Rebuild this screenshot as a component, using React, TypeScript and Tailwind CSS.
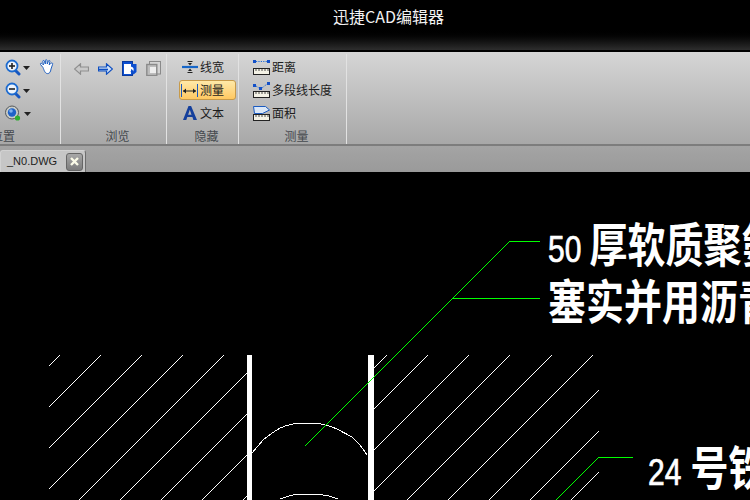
import React from "react";

const cjk = "font-['Microsoft_YaHei','Noto_Sans_CJK_SC',sans-serif]";

const hatchLines = [
  // left block
  [49, 366, 60, 355], [49, 407, 101, 355], [49, 448, 142, 355], [49, 489, 183, 355],
  [79, 500, 224, 355], [120, 500, 247, 373], [161, 500, 247, 414], [202, 500, 247, 455], [243, 500, 247, 496],
  // right block
  [374, 368, 387, 355], [374, 409, 428, 355], [374, 450, 469, 355], [374, 491, 510, 355],
  [407, 500, 552, 355], [448, 500, 593, 355], [489, 500, 599, 390], [530, 500, 599, 431], [571, 500, 599, 472],
];

const Caret = () => (
  <svg width="7" height="4" viewBox="0 0 7 4"><path d="M0 0h7L3.5 4z" fill="#222" /></svg>
);

const Zoom = ({ plus }: { plus?: boolean }) => (
  <svg width="16" height="17" viewBox="0 0 16 17">
    <path d="M10 11l4 4" stroke="#1657c0" strokeWidth="3" strokeLinecap="round" />
    <circle cx="7" cy="7" r="5.5" fill="#eef4fb" stroke="#1c6bd0" strokeWidth="1.8" />
    <path d="M4 7h6" stroke="#222" strokeWidth="1.6" />
    {plus && <path d="M7 4v6" stroke="#222" strokeWidth="1.6" />}
  </svg>
);

const Globe = () => (
  <svg width="17" height="17" viewBox="0 0 17 17">
    <ellipse cx="7" cy="7.5" rx="6.5" ry="6.5" fill="#c9cdc8" stroke="#55585a" strokeWidth="1" />
    <circle cx="7" cy="7.5" r="4.2" fill="#1f62c8" />
    <circle cx="6" cy="6" r="1.8" fill="#7fb0ec" />
    <circle cx="12.5" cy="13" r="2.6" fill="#2fae2f" />
  </svg>
);

const Hand = () => (
  <svg width="16" height="16" viewBox="0 0 16 16">
    <path
      d="M4 8.5L1.5 5.5C1 4.5 2 3.8 3 4.5L4.5 6 3.8 2.5C3.7 1.3 5 1.1 5.4 2.2L6.3 5 6.4 1.5C6.5.4 7.9.4 8 1.5L8.3 5 9.4 2C9.8 1 11 1.3 10.9 2.4L10.2 6 12 4.2C13 3.5 14 4.2 13.6 5.3L12 10C11.6 13 10.5 14.6 8.5 14.6 6 14.6 5 11 4 8.5z"
      fill="#fff"
      stroke="#1f5fc0"
      strokeWidth="1"
    />
  </svg>
);

const Arrow = ({ left, muted }: { left?: boolean; muted?: boolean }) => (
  <svg width="15" height="12" viewBox="0 0 15 12" className={left ? "-scale-x-100" : ""}>
    <path
      d="M0.5 4h8V0.8L14.5 6l-6 5.2V8h-8z"
      fill={muted ? "#c9c9c9" : "#cfe0f7"}
      stroke={muted ? "#8f8f8f" : "#0f4fc0"}
      strokeWidth="1.2"
    />
    {!muted && <path d="M1 6.5h9" stroke="#0f4fc0" strokeWidth="1.6" />}
  </svg>
);

const DocBlue = () => (
  <svg width="15" height="15" viewBox="0 0 15 15">
    <rect x="0.5" y="0.5" width="10" height="14" fill="#0d4fd0" stroke="#0a3a9e" />
    <rect x="2" y="3" width="7" height="10" fill="#fff" />
    <path d="M9 7.5V3H14.5V11L11.5 13.5 8 10.5H10.5V7.5z" fill="#0d4fd0" />
    <path d="M5 7L8 4.2V5.8C11 5.6 12.5 7.4 11.2 10.4 10.8 8.4 9.6 8 8 8.2V9.8z" fill="#fff" />
  </svg>
);

const DocGray = () => (
  <svg width="15" height="15" viewBox="0 0 15 15">
    <rect x="3.5" y="0.5" width="11" height="12.5" fill="#d4d4d4" stroke="#8a8a8a" />
    <rect x="0.8" y="3.5" width="10" height="11" fill="#bdbdbd" stroke="#8a8a8a" strokeWidth="1.4" />
    <rect x="4" y="6" width="6" height="6" fill="#eee" />
  </svg>
);

const LineWidth = () => (
  <svg width="16" height="12" viewBox="0 0 16 12">
    <path d="M0 6h16" stroke="#1766c8" strokeWidth="2.2" />
    <path d="M5.5 .5h5M5.5 11.5h5" stroke="#222" strokeWidth="1" />
    <path d="M6 2h4L8 4.5zM6 10h4L8 7.5z" fill="#222" />
  </svg>
);

const Measure = () => (
  <svg width="17" height="13" viewBox="0 0 17 13">
    <path d="M.5 0v13M16.5 0v13" stroke="#1b5bc0" strokeWidth="1" />
    <path d="M2 7h13" stroke="#222" strokeWidth="1" />
    <path d="M5 4.5L2 7l3 2.5zM12 4.5L15 7l-3 2.5z" fill="#222" />
  </svg>
);

const TextA = () => (
  <svg width="14" height="14" viewBox="0 0 14 14">
    <path d="M0 14L5.5 0h2.6L14 14h-3.6l-1-3H4.3l-1 3zM5.1 8.7h3.4L6.8 3.8z" fill="#143f9c" />
  </svg>
);

const Ruler = ({ y = 9 }: { y?: number }) => (
  <g>
    <rect x="0.5" y={y + 0.5} width="16" height="6" fill="#f4f2e6" stroke="#222" />
    <path d={`M3 ${y + 1}v2M6 ${y + 1}v2M9 ${y + 1}v2M12 ${y + 1}v2M15 ${y + 1}v2`} stroke="#222" strokeWidth="0.8" />
  </g>
);

const Dist = () => (
  <svg width="17" height="16" viewBox="0 0 17 16">
    <rect x="0" y="1" width="3" height="3" fill="#1350c8" />
    <rect x="14" y="1" width="3" height="3" fill="#1350c8" />
    <path d="M3 2.5h11" stroke="#1f6cd8" strokeDasharray="1.2 1.2" />
    <Ruler />
  </svg>
);

const Poly = () => (
  <svg width="17" height="16" viewBox="0 0 17 16">
    <rect x="0" y="2" width="3" height="3" fill="#1350c8" />
    <rect x="6" y="5" width="3" height="3" fill="#1350c8" />
    <rect x="14" y="0" width="3" height="3" fill="#1350c8" />
    <path d="M3 4l3 2M9 6l5-4" stroke="#1f6cd8" strokeDasharray="1 1" />
    <Ruler />
  </svg>
);

const Area = () => (
  <svg width="17" height="16" viewBox="0 0 17 16">
    <path d="M.5 1.5h12l4 3.5-7 3.5h-8z" fill="#dbe8f8" stroke="#1b5bc0" />
    <Ruler />
  </svg>
);

const ToolRow = ({ icon, label, active }: { icon: React.ReactNode; label: string; active?: boolean }) => (
  <div
    className={`flex items-center h-[20px] gap-[2px] rounded-[3px] text-[12px] leading-none text-[#1c1c1c] ${cjk} ${
      active ? "border border-[#c79a4a] bg-gradient-to-b from-[#ffe9a8] to-[#ffc860] pl-[1px] w-[57px]" : "pl-[2px]"
    }`}
  >
    <span className="flex justify-center w-[17px]">{icon}</span>
    <span>{label}</span>
  </div>
);

const Group = ({ width, label, children, clip }: { width: string; label: string; children: React.ReactNode; clip?: boolean }) => (
  <div className={`flex flex-col h-full border-r border-r-[#e2e2e2] overflow-hidden ${width}`}>
    <div className="flex-1 min-h-0">{children}</div>
    <div
      className={`h-[17px] text-[12px] leading-[17px] text-[#45494e] ${cjk} ${clip ? "ml-[-9px]" : "text-center pl-[8px]"}`}
    >
      {label}
    </div>
  </div>
);

export default function App() {
  return (
    <div className="relative w-[750px] h-[500px] overflow-hidden bg-black">
      <header className="h-[50px] pt-[5px] pl-[333px] bg-gradient-to-b from-[#000] from-[55%] to-[#2e2e2e]">
        <span className={`block text-[16px] leading-[22px] text-[#f2f2f2] ${cjk}`}>迅捷CAD编辑器</span>
      </header>
      <div className="h-[2px] bg-black" />

      <div className="flex h-[92px] pt-[2px] bg-gradient-to-b from-[#d6d6d6] to-[#a8a8a8]">
        <Group width="w-[61px]" label="位置" clip>
          <div className="grid grid-cols-[34px_20px] pt-[5px] pl-[5px]">
            <div className="flex flex-col gap-[6px]">
              <div className="flex items-center gap-[2px] h-[17px]"><Zoom plus /><Caret /></div>
              <div className="flex items-center gap-[2px] h-[17px]"><Zoom /><Caret /></div>
              <div className="flex items-center gap-[2px] h-[17px]"><Globe /><Caret /></div>
            </div>
            <div><Hand /></div>
          </div>
        </Group>
        <Group width="w-[106px]" label="浏览">
          <div className="flex items-center pl-[13px] pt-[7px] gap-[9px]">
            <Arrow left muted />
            <Arrow />
            <DocBlue />
            <DocGray />
          </div>
        </Group>
        <Group width="w-[72px]" label="隐藏">
          <div className="flex flex-col pt-[3px] pl-[12px] gap-[3px]">
            <ToolRow icon={<LineWidth />} label="线宽" />
            <ToolRow icon={<Measure />} label="测量" active />
            <ToolRow icon={<TextA />} label="文本" />
          </div>
        </Group>
        <Group width="w-[108px]" label="测量">
          <div className="flex flex-col pt-[3px] pl-[12px] gap-[3px]">
            <ToolRow icon={<Dist />} label="距离" />
            <ToolRow icon={<Poly />} label="多段线长度" />
            <ToolRow icon={<Area />} label="面积" />
          </div>
        </Group>
        <div className="flex-1" />
      </div>

      <div className="flex items-end h-[28px] border-t-2 border-t-[#7d7d7d] bg-gradient-to-b from-[#a4a4a4] to-[#9a9a9a]">
        <div className="flex items-center h-[22px] w-[86px] pl-[6px] gap-[9px] rounded-t-[3px] border border-b-0 border-[#d2d2d2] border-r-[#6d6d6d] bg-[#c6c6c6]">
          <span className="font-['Liberation_Sans',sans-serif] text-[11px] text-[#222]">_N0.DWG</span>
          <span className="flex items-center justify-center w-[17px] h-[18px] rounded-[3px] border border-[#666] bg-gradient-to-b from-[#a8a8a8] to-[#7d7d7d]">
            <svg width="9" height="9" viewBox="0 0 9 9">
              <path d="M1 1l7 7M8 1L1 8" stroke="#fbfbe8" strokeWidth="2.4" />
            </svg>
          </span>
        </div>
      </div>

      {/* drawing canvas, everything below sits on free coordinates */}
      <svg className="absolute left-0 top-0" width="750" height="500" viewBox="0 0 750 500" shapeRendering="crispEdges">
        {hatchLines.map(([x1, y1, x2, y2], i) => (
          <line key={i} x1={x1} y1={y1} x2={x2} y2={y2} stroke="#fff" strokeWidth="1" />
        ))}
        <rect x="247" y="355" width="5" height="145" fill="#fff" />
        <rect x="368" y="355" width="6" height="145" fill="#fff" />
        <path d="M252 453 L263 440 Q270 434 280 428 Q292 423 302 423 H315 Q328 425 337 429 L352 437 Q361 445 367 455" fill="none" stroke="#fff" />
        <path d="M280 499 Q288 496 297 494 H317 Q328 495 338 499" fill="none" stroke="#fff" />
        <path d="M305 446L510 241H540M453 298H540M556 500L599 457H633" fill="none" stroke="#00ff00" />
      </svg>

      <div className={`absolute left-[548px] top-[218px] flex items-baseline whitespace-nowrap font-bold text-white text-[38px] leading-[50px] scale-y-[1.22] ${cjk}`}>
        <span className="font-['Liberation_Sans',sans-serif] font-normal text-[30px] mr-[8px] [-webkit-text-stroke:0.6px_white]">50</span>
        <span>厚软质聚氨</span>
      </div>
      <div className={`absolute left-[548px] top-[274px] whitespace-nowrap font-bold text-white text-[38px] leading-[50px] scale-y-[1.22] ${cjk}`}>
        塞实并用沥青
      </div>
      <div className={`absolute left-[648px] top-[441px] flex items-baseline whitespace-nowrap font-bold text-white text-[38px] leading-[50px] scale-y-[1.22] ${cjk}`}>
        <span className="font-['Liberation_Sans',sans-serif] font-normal text-[30px] mr-[9px] [-webkit-text-stroke:0.6px_white]">24</span>
        <span>号铁</span>
      </div>
    </div>
  );
}
